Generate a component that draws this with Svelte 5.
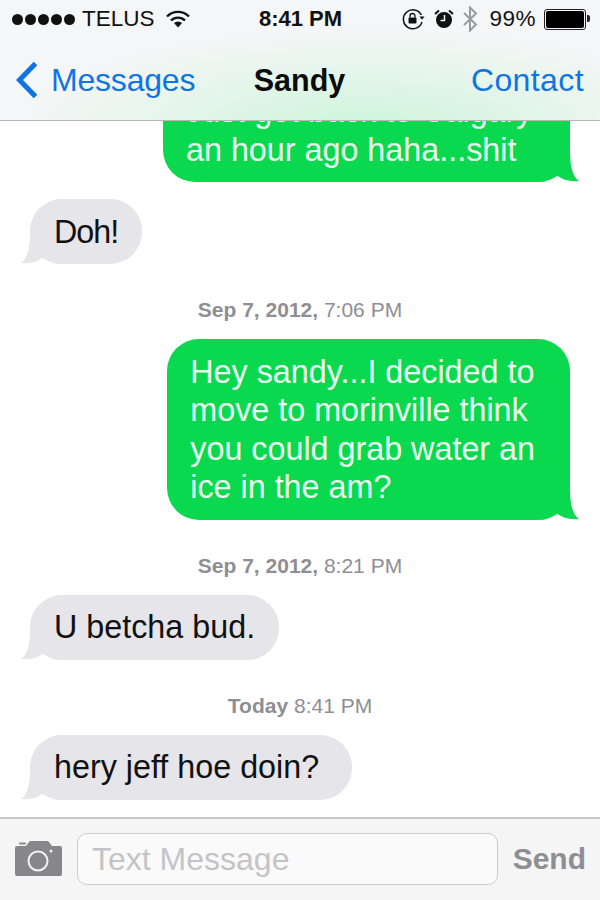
<script lang="ts">
  interface Item {
    kind: "sent" | "received" | "stamp";
    lines?: string[];
    day?: string;
    time?: string;
  }

  const items: Item[] = [
    { kind: "sent", lines: ["Just got back to Calgary", "an hour ago haha...shit"] },
    { kind: "received", lines: ["Doh!"] },
    { kind: "stamp", day: "Sep 7, 2012,", time: "7:06 PM" },
    {
      kind: "sent",
      lines: ["Hey sandy...I decided to", "move to morinville think", "you could grab water an", "ice in the am?"],
    },
    { kind: "stamp", day: "Sep 7, 2012,", time: "8:21 PM" },
    { kind: "received", lines: ["U betcha bud."] },
    { kind: "stamp", day: "Today", time: "8:41 PM" },
    { kind: "received", lines: ["hery jeff hoe doin?"] },
  ];
</script>

<div class="phone">
  <header class="top">
    <div class="status">
      <div class="status-left">
        <span class="dots"><i></i><i></i><i></i><i></i><i></i></span>
        <span class="carrier">TELUS</span>
        <svg class="wifi" width="24" height="18" viewBox="0 0 24 18">
          <path d="M1 6.500a15.500 15.500 0 0 1 22 0" fill="none" stroke="#111" stroke-width="2.400" />
          <path d="M5 10.500a10 10 0 0 1 14 0" fill="none" stroke="#111" stroke-width="2.400" />
          <path d="M12 17.500l-4-4.400a5.600 5.600 0 0 1 8 0z" fill="#111" />
        </svg>
      </div>
      <span class="clock">8:41 PM</span>
      <div class="status-right">
        <svg width="24" height="22" viewBox="0 0 24 22">
          <path d="M20 14a9.500 9.500 0 1 1-.6-7" fill="none" stroke="#111" stroke-width="1.500" />
          <path d="M17.500 8.500h5l-2.500 3.200z" fill="#111" />
          <rect x="6.500" y="9.500" width="8" height="6" rx="1" fill="#111" />
          <path d="M8 9.500V8a2.500 2.500 0 0 1 5 0v1.500" fill="none" stroke="#111" stroke-width="1.300" />
        </svg>
        <svg class="alarm" width="20" height="22" viewBox="0 0 20 22">
          <circle cx="10" cy="12" r="8" fill="#111" />
          <path d="M10.500 7v5.500H6.500" fill="none" stroke="#f5f6f6" stroke-width="1.500" />
          <path d="M1 6l4-3.500M19 6l-4-3.500" stroke="#111" stroke-width="2" />
        </svg>
        <svg class="bt" width="16" height="26" viewBox="0 0 16 26">
          <path d="M2 7l12 11.500-6 6V1.500l6 6L2 19" fill="none" stroke="#9a9a9a" stroke-width="2" />
        </svg>
        <span class="percent">99%</span>
        <span class="battery"><span class="charge"></span></span>
      </div>
    </div>
    <nav class="nav">
      <div class="back">
        <svg width="24" height="38" viewBox="0 0 24 38">
          <path d="M20.500 2.500L4.500 19l16 16.500" fill="none" stroke="#0f72e5" stroke-width="5" />
        </svg>
        <span class="back-label">Messages</span>
      </div>
      <span class="title">Sandy</span>
      <span class="contact">Contact</span>
    </nav>
  </header>

  <main class="thread">
    {#each items as item}
      {#if item.kind === "stamp"}
        <div class="stamp"><b>{item.day}</b> {item.time}</div>
      {:else}
        <div class="bubble {item.kind}">
          <svg class="tail" width="40" height="30" viewBox="0 0 40 30">
            <path d="M0 30C6 30 12 27 17 23.500C22 27.500 30 30 39 29C33 25 30 15 30 0L0 0Z" />
          </svg>
          {#each item.lines ?? [] as line}
            <div class="line">{line}</div>
          {/each}
        </div>
      {/if}
    {/each}
  </main>

  <footer class="composer">
    <svg class="camera" width="48" height="38" viewBox="0 0 48 38">
      <path
        d="M2 6H11L14 2Q14.500 1 16 1H32Q33.500 1 34 2L37 6H45Q47 6 47 8V34Q47 36 45 36H2Q0 36 0 34V8Q0 6 2 6Z"
        fill="#86868b"
      />
      <rect x="4" y="2.500" width="7" height="2" rx="1" fill="#86868b" />
      <circle cx="23" cy="21" r="9.500" fill="none" stroke="#f4f4f5" stroke-width="2" />
      <circle cx="36" cy="11" r="1.500" fill="#f4f4f5" />
    </svg>
    <div class="field">Text Message</div>
    <span class="send">Send</span>
  </footer>
</div>

<style>
  :global(body) {
    background: #fff;
  }

  .phone {
    position: relative;
    width: 600px;
    height: 900px;
    display: flex;
    flex-direction: column;
    overflow: hidden;
    font-family: "Liberation Sans", Arial, sans-serif;
    color: #111;
    background: #fff;
  }

  .top {
    position: absolute;
    top: 0;
    left: 0;
    right: 0;
    z-index: 2;
    height: 120px;
    background:
      radial-gradient(ellipse 350px 100px at 365px 128px, #cdf5d9 0%, rgba(222, 245, 230, 0.8) 50%, rgba(246, 247, 247, 0) 100%),
      #f5f6f7;
    border-bottom: 1px solid #b4b6b8;
  }

  .status {
    box-sizing: border-box;
    height: 40px;
    display: grid;
    grid-template-columns: 1fr auto 1fr;
    align-items: center;
    padding: 0 11px 2px 12px;
    font-size: 22.500px;
  }

  .status-left,
  .status-right {
    display: flex;
    align-items: center;
  }

  .status-right {
    justify-content: flex-end;
    gap: 8px;
  }

  .dots {
    display: flex;
    gap: 2px;
    margin-right: 7px;
  }

  .dots i {
    width: 11px;
    height: 11px;
    border-radius: 50%;
    background: #111;
  }

  .wifi {
    margin-left: 11px;
  }

  .clock {
    font-weight: bold;
    font-size: 22px;
  }

  .bt {
    margin: 0 3px 0 0;
  }

  .percent {
    letter-spacing: 0.500px;
  }

  .battery {
    position: relative;
    width: 38px;
    height: 17px;
    border: 1px solid #222;
    border-radius: 3px;
    padding: 1px;
    margin-right: 3px;
  }

  .battery::after {
    content: "";
    position: absolute;
    right: -5px;
    top: 5px;
    width: 3px;
    height: 7px;
    background: #222;
    border-radius: 0 2px 2px 0;
  }

  .charge {
    display: block;
    height: 100%;
    width: 100%;
    background: #000;
    border-radius: 2px;
  }

  .nav {
    height: 80px;
    display: grid;
    grid-template-columns: 1fr auto 1fr;
    align-items: center;
    padding: 0 16px 0 15px;
    font-size: 32px;
    color: #1273e4;
  }

  .back {
    display: flex;
    align-items: center;
    gap: 12px;
  }

  .back-label {
    letter-spacing: -0.200px;
  }

  .title {
    color: #0c0c0c;
    font-weight: bold;
    font-size: 30.500px;
  }

  .contact {
    justify-self: end;
    letter-spacing: 0.400px;
  }

  .thread {
    flex: 1;
    min-height: 0;
    display: flex;
    flex-direction: column;
    justify-content: flex-end;
    padding: 0 30px 17px;
    overflow: hidden;
  }

  .bubble {
    position: relative;
    flex: none;
    width: fit-content;
    font-size: 32.300px;
    line-height: 38.600px;
    padding: 13.200px 24px;
    border-radius: 32px;
  }

  .line {
    position: relative;
  }

  .bubble + .bubble {
    margin-top: 17px;
  }

  .sent {
    align-self: flex-end;
    background: #0ad94f;
    color: #eafff0;
    padding: 13.200px 35px 13.200px 23px;
  }

  .sent:first-child {
    box-sizing: border-box;
    min-width: 407px;
  }

  .received {
    align-self: flex-start;
    background: #e5e5ea;
  }

  .sent + .received {
    letter-spacing: -1px;
  }

  .received:last-child {
    padding-right: 33px;
  }

  .tail {
    position: absolute;
    bottom: 0;
  }

  .sent .tail {
    right: -10px;
    fill: #0ad94f;
  }

  .received .tail {
    left: -10px;
    fill: #e5e5ea;
    transform: scaleX(-1);
  }

  .stamp {
    flex: none;
    height: 30px;
    line-height: 30px;
    margin: 30.600px 0 14.400px;
    text-align: center;
    font-size: 21px;
    color: #8e8e93;
  }

  .composer {
    flex: none;
    box-sizing: border-box;
    height: 83px;
    display: flex;
    align-items: center;
    gap: 14px;
    padding: 0 14px 1px 15px;
    background: #f5f5f6;
    border-top: 2px solid #c8c8ca;
  }

  .field {
    flex: 1;
    height: 52px;
    line-height: 50px;
    box-sizing: border-box;
    padding-left: 14px;
    background: #fafafa;
    border: 1px solid #cbcbcf;
    border-radius: 10px;
    font-size: 32px;
    color: #c4c4c8;
  }

  .send {
    margin-left: 1px;
    font-size: 30px;
    font-weight: bold;
    color: #8e8e93;
  }
</style>
